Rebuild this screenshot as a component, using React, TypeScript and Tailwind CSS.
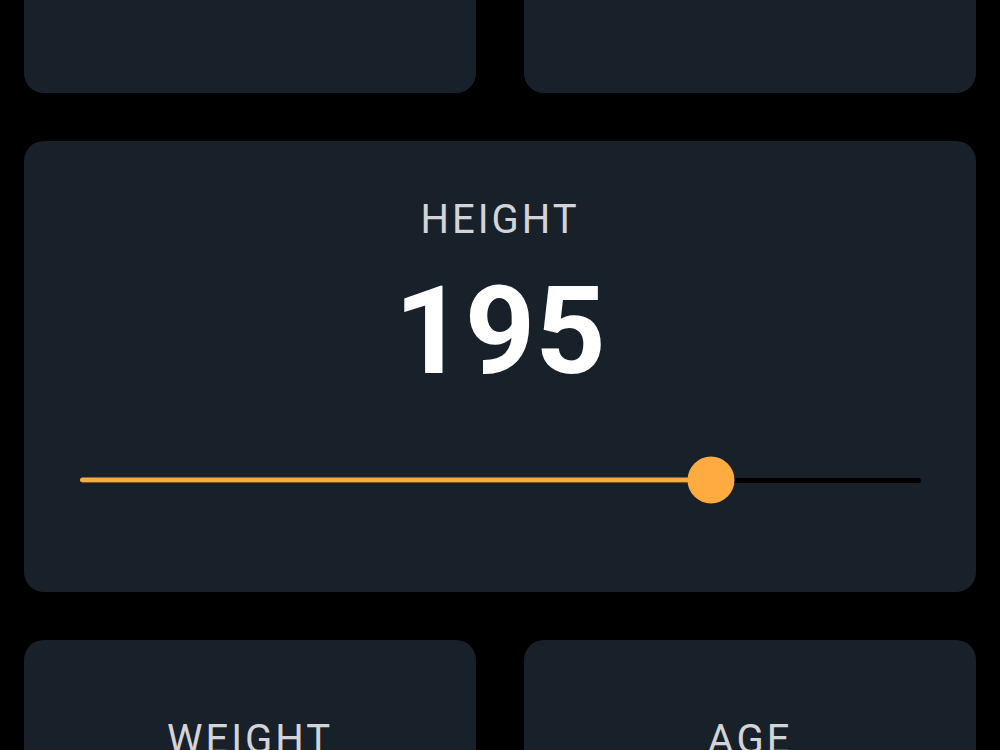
import React from 'react';

const font = { fontFamily: 'Roboto, "Noto Sans", sans-serif' };

const Card: React.FC<{ className?: string; children?: React.ReactNode }> = ({ className = '', children }) => (
  <div className={`rounded-[20px] bg-[#18202a] ${className}`}>{children}</div>
);

const Label: React.FC<{ text: string }> = ({ text }) => (
  <div className="text-center text-[40px] leading-[40px] tracking-[3px] text-[#d2d4d8]">{text}</div>
);

const HeightSlider: React.FC<{ value: number; min: number; max: number }> = ({ value, min, max }) => {
  const pct = ((value - min) / (max - min)) * 100;
  return (
    <div className="pl-[56px] pr-[55px]">
      <div className="relative h-[48px] flex items-center">
        <div className="h-[5px] w-full rounded-full bg-black" />
        <div
          className="absolute left-0 top-1/2 h-[5px] -translate-y-1/2 rounded-full bg-[#ffab40]"
          style={{ width: `${pct}%` }}
        />
        <div
          className="absolute top-1/2 h-[47px] w-[47px] -translate-x-1/2 -translate-y-1/2 rounded-full bg-[#ffab40]"
          style={{ left: `${pct}%` }}
        />
      </div>
    </div>
  );
};

export default function App() {
  return (
    <div className="h-[750px] w-[1000px] overflow-hidden bg-black px-[24px]" style={font}>
      <div className="-mt-[107px] flex flex-col gap-[48px]">
        <div className="grid grid-cols-2 gap-[48px]">
          <Card className="h-[200px]" />
          <Card className="h-[200px]" />
        </div>

        <Card className="h-[451px] pt-[59px]">
          <Label text="HEIGHT" />
          <div className="mt-[30px] text-center text-[123px] font-bold leading-[123px] text-white">195</div>
          <div className="mt-[63px]">
            <HeightSlider value={195} min={120} max={220} />
          </div>
        </Card>

        <div className="grid grid-cols-2 gap-[48px]">
          <Card className="h-[400px] pt-[80px]">
            <Label text="WEIGHT" />
          </Card>
          <Card className="h-[400px] pt-[80px]">
            <Label text="AGE" />
          </Card>
        </div>
      </div>
    </div>
  );
}
